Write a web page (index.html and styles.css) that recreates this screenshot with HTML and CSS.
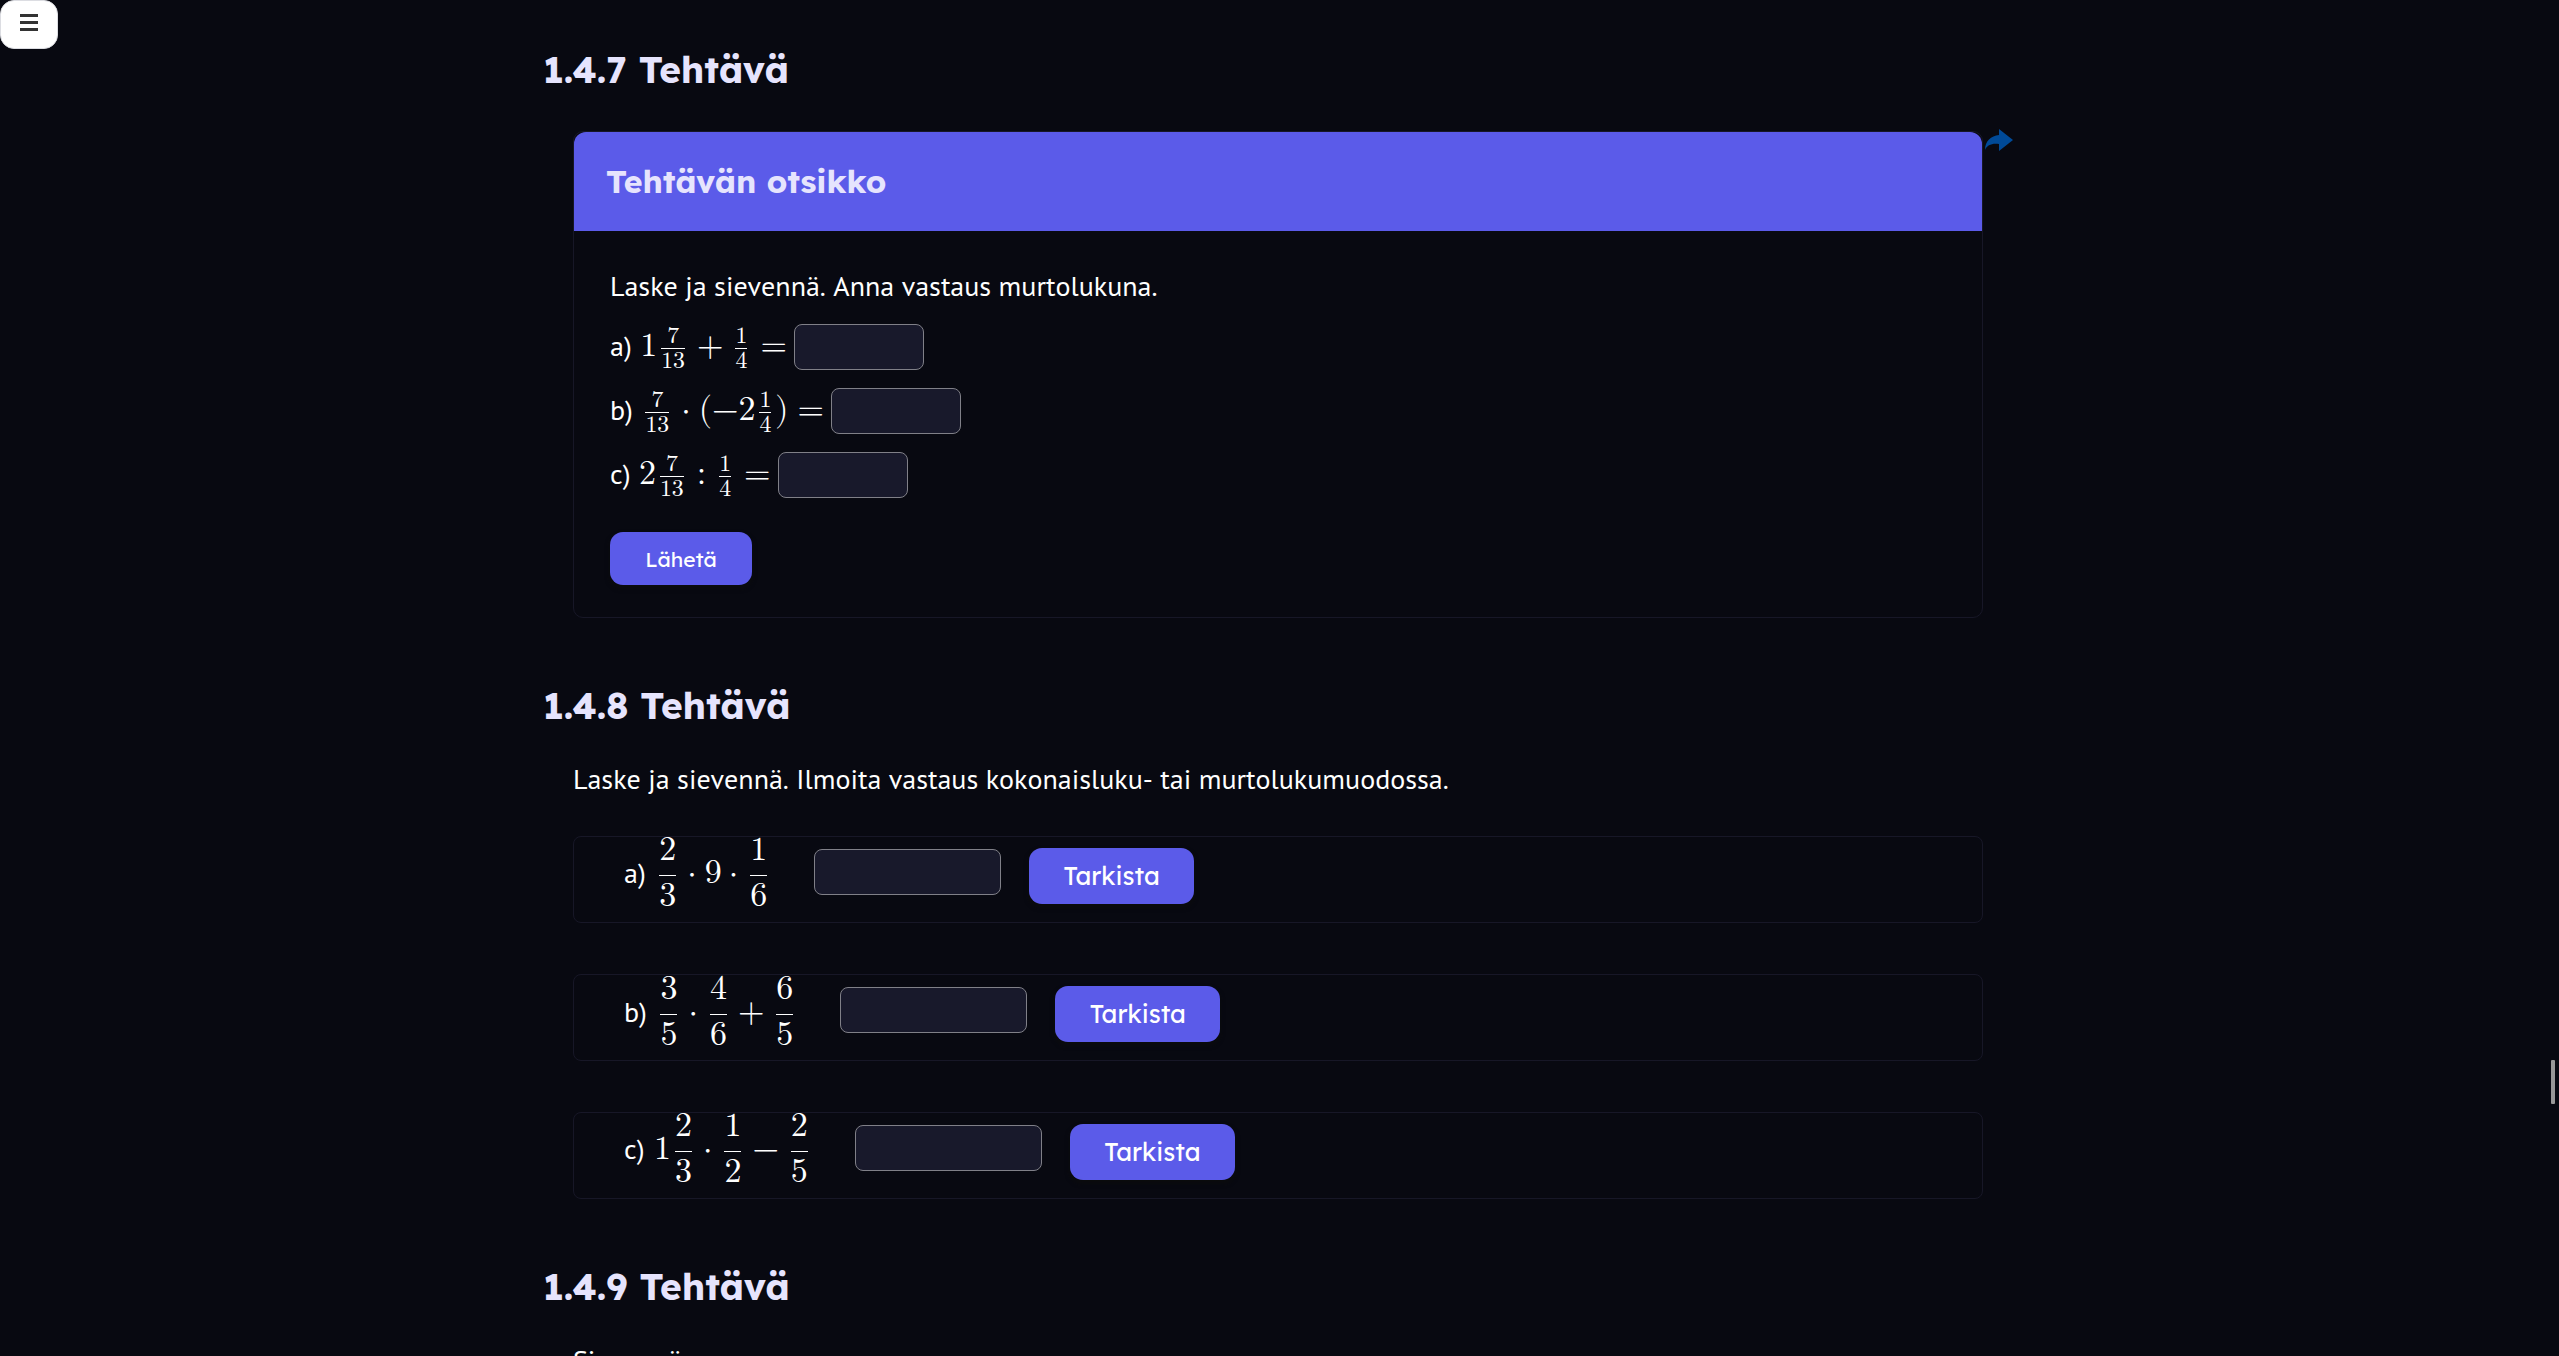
FILE: index.html
```
<!DOCTYPE html>
<html lang="fi">
<head>
<meta charset="utf-8">
<title>1.4 Tehtävät</title>
<link rel="stylesheet" href="styles.css">
</head>
<body>
<button class="menu" type="button" aria-label="Valikko"><span class="menu-bar"></span><span class="menu-bar"></span><span class="menu-bar"></span></button>
<main class="page">
  <section class="task">
    <h2 class="task-title">1.4.7 Tehtävä</h2>
    <div class="card">
      <a class="share" href="#jaa" aria-label="Jaa"><svg viewBox="0 0 28 22" width="28" height="22"><path d="M14 0 28 11 14 22V15C7 14 2 16 0 21 0 12 6 7 14 6Z"/></svg></a>
      <h3 class="card-title">Tehtävän otsikko</h3>
      <form class="card-body">
        <p class="text">Laske ja sievennä. Anna vastaus murtolukuna.</p>
        <div class="line">
          <label for="v1">a) <math><mn>1</mn><mfrac><mn>7</mn><mn>13</mn></mfrac><mo lspace="8px" rspace="8px">+</mo><mfrac><mn>1</mn><mn>4</mn></mfrac><mo lspace="9px" rspace="0">=</mo></math></label>
          <input class="field field-short" id="v1" type="text">
        </div>
        <div class="line">
          <label for="v2">b) <math><mfrac><mn>7</mn><mn>13</mn></mfrac><mo lspace="8px" rspace="8px">⋅</mo><mo lspace="0" rspace="0" stretchy="false">(</mo><mo lspace="0" rspace="0">−</mo><mn>2</mn><mfrac><mn>1</mn><mn>4</mn></mfrac><mo lspace="0" rspace="0" stretchy="false">)</mo><mo lspace="9px" rspace="0">=</mo></math></label>
          <input class="field field-short" id="v2" type="text">
        </div>
        <div class="line">
          <label for="v3">c) <math><mn>2</mn><mfrac><mn>7</mn><mn>13</mn></mfrac><mo lspace="9px" rspace="9px">:</mo><mfrac><mn>1</mn><mn>4</mn></mfrac><mo lspace="9px" rspace="0">=</mo></math></label>
          <input class="field field-short" id="v3" type="text">
        </div>
        <button class="button button-send" type="button">Lähetä</button>
      </form>
    </div>
  </section>
  <section class="task">
    <h2 class="task-title">1.4.8 Tehtävä</h2>
    <p class="text intro">Laske ja sievennä. Ilmoita vastaus kokonaisluku- tai murtolukumuodossa.</p>
    <div class="boxes">
      <form class="box">
        <label for="t1">a) <math displaystyle="true"><mfrac><mn>2</mn><mn>3</mn></mfrac><mo lspace="7px" rspace="8px">⋅</mo><mn>9</mn><mo lspace="7px" rspace="8px">⋅</mo><mfrac><mn>1</mn><mn>6</mn></mfrac></math></label>
        <input class="field" id="t1" type="text">
        <button class="button" type="button">Tarkista</button>
      </form>
      <form class="box">
        <label for="t2">b) <math displaystyle="true"><mfrac><mn>3</mn><mn>5</mn></mfrac><mo lspace="7px" rspace="8px">⋅</mo><mfrac><mn>4</mn><mn>6</mn></mfrac><mo lspace="7px" rspace="8px">+</mo><mfrac><mn>6</mn><mn>5</mn></mfrac></math></label>
        <input class="field" id="t2" type="text">
        <button class="button" type="button">Tarkista</button>
      </form>
      <form class="box">
        <label for="t3">c) <math displaystyle="true"><mn>1</mn><mfrac><mn>2</mn><mn>3</mn></mfrac><mo lspace="7px" rspace="8px">⋅</mo><mfrac><mn>1</mn><mn>2</mn></mfrac><mo lspace="7px" rspace="8px">−</mo><mfrac><mn>2</mn><mn>5</mn></mfrac></math></label>
        <input class="field" id="t3" type="text">
        <button class="button" type="button">Tarkista</button>
      </form>
    </div>
  </section>
  <section class="task">
    <h2 class="task-title">1.4.9 Tehtävä</h2>
    <p class="text intro">Sievennä.</p>
  </section>
</main>
<div class="scroll-thumb"></div>
</body>
</html>
```
FILE: styles.css
```
* { box-sizing: border-box; }
html, body { height: 100%; }
body {
  margin: 0;
  padding-right: 3px;
  overflow: hidden;
  background: #080911;
  color: #fff;
  font: 28px/40px "PT Sans", "Open Sans", "Noto Sans", sans-serif;
  font-kerning: none;
}
h2, h3, p { margin: 0; }
.page {
  display: flex;
  flex-direction: column;
  gap: 63px;
  max-width: 1470px;
  margin: 0 auto;
  padding-top: 45px;
}
.task-title {
  color: #e6e4fd;
  font: 700 37px/48px "Lexend", "Open Sans", "Noto Sans", sans-serif;
  font-kerning: normal;
}
.card, .intro, .boxes { margin-left: 30px; margin-right: 30px; }
.card {
  position: relative;
  margin-top: 38px;
  border: 1px solid #171727;
  border-radius: 10px;
}
.card-title {
  padding: 0 32px;
  border-radius: 12px 12px 0 0;
  background: #5b5be9;
  color: #e6e4fd;
  font: 700 32px/99px "Lexend", "Open Sans", "Noto Sans", sans-serif;
  font-kerning: normal;
}
.card-body { padding: 35px 36px 32px; }
.card-body .text { margin-bottom: 9px; }
.share {
  position: absolute;
  left: 100%;
  top: -3px;
  margin-left: 3px;
  line-height: 0;
  fill: #004a98;
}
.line { display: flex; align-items: center; gap: 7px; height: 64px; }
math {
  margin-left: 1px;
  font-family: "Latin Modern Math", "Liberation Serif", serif;
  font-size: 34px;
}
mfrac { margin: 0 3px; }
.field {
  width: 187px;
  height: 46px;
  padding: 0 10px;
  border: 1px solid #808088;
  border-radius: 8px;
  background: #18192b;
  color: #fff;
  font: inherit;
}
.field-short { width: 130px; }
.button {
  width: 165px;
  height: 56px;
  border: 0;
  border-radius: 13px;
  background: #5b5be9;
  color: #fff;
  font: 400 25px/32px "Lexend", "Open Sans", "Noto Sans", sans-serif;
  font-kerning: normal;
  box-shadow: 0 3px 5px #0b0c0d;
}
.button-send {
  display: block;
  width: 142px;
  height: 53px;
  margin-top: 25px;
  font-size: 21px;
}
.intro { margin-top: 30px; }
.boxes { display: flex; flex-direction: column; gap: 51px; margin-top: 37px; }
.box {
  display: flex;
  align-items: flex-start;
  height: 87px;
  padding-left: 50px;
  border: 1px solid #171727;
  border-radius: 8px;
}
.box label { line-height: 72px; }
.box math { margin-left: 2px; }
.box .field { margin: 12px 28px 0 43px; }
.box .button { margin-top: 11px; }
.menu {
  position: fixed;
  left: 0;
  top: 0;
  display: flex;
  flex-direction: column;
  justify-content: center;
  align-items: center;
  gap: 4px;
  width: 58px;
  height: 49px;
  padding: 0 0 4px;
  border: 1px solid #dcdde2;
  border-radius: 14px;
  background: #fff;
}
.menu-bar { width: 18px; height: 3px; background: #333; }
.scroll-thumb {
  position: fixed;
  right: 4px;
  top: 1060px;
  width: 4px;
  height: 44px;
  border-radius: 1px;
  background: #989898;
}
```
